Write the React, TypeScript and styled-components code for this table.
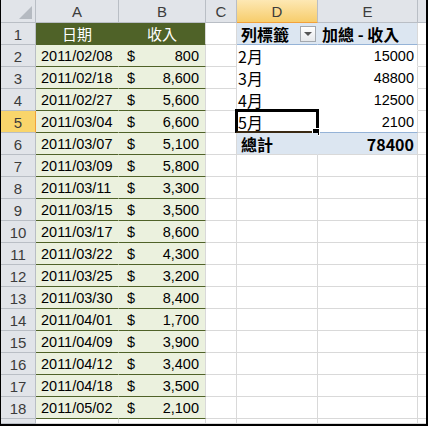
import React from "react";
import styled, { createGlobalStyle, css } from "styled-components";

const Global = createGlobalStyle`
  html, body { margin: 0; padding: 0; background: #fff; }
  body { font-family: "Liberation Sans", Arial, sans-serif; }
  * { box-sizing: border-box; }
`;

const GREEN = "#4f6228";
const LIGHT_GREEN = "#ebf1de";
const GRID = "#d9d9d9";
const HEAD_BG = "#e1e4e9";
const HEAD_LINE = "#b9bec5";
const PIVOT_BG = "#dce6f1";
const PIVOT_LINE = "#95b3d7";

const Frame = styled.div`
  width: 428px;
  height: 426px;
  border-left: 1px solid #000;
  border-right: 2px solid #000;
  border-bottom: 2px solid #000;
  overflow: hidden;
`;

const Sheet = styled.div`
  display: grid;
  grid-template-columns: 35px 83px 87px 31px 81px 100px 1fr;
  grid-template-rows: 23px repeat(18, 22px) 1fr;
  height: 100%;
`;

const cellBase = css`
  border-right: 1px solid ${GRID};
  border-bottom: 1px solid ${GRID};
  display: flex;
  align-items: center;
  min-width: 0;
  overflow: visible;
  white-space: nowrap;
`;

const Corner = styled.div`
  ${cellBase};
  background: ${HEAD_BG};
  border-color: ${HEAD_LINE};
  position: relative;
  &::after {
    content: "";
    position: absolute;
    right: 3px;
    bottom: 3px;
    width: 0;
    height: 0;
    border-left: 13px solid transparent;
    border-bottom: 13px solid #b5bac1;
  }
`;

const ColHeader = styled.div<{ $active?: boolean; $edge?: boolean }>`
  ${cellBase};
  justify-content: center;
  font-family: "Liberation Sans", sans-serif;
  font-size: 15px;
  color: #3c3c3c;
  padding-top: 1px;
  background: ${(p) =>
    p.$active ? "linear-gradient(#fde8b4, #f7cd6c)" : HEAD_BG};
  border-right: ${(p) => (p.$edge ? "none" : `1px solid ${HEAD_LINE}`)};
  border-bottom-color: ${(p) => (p.$active ? "#f2a13a" : HEAD_LINE)};
`;

const RowHeader = styled.div<{ $active?: boolean }>`
  ${cellBase};
  justify-content: center;
  font-family: "Liberation Sans", sans-serif;
  font-size: 15px;
  color: #3c3c3c;
  padding-top: 1px;
  background: ${(p) => (p.$active ? "#f9d56b" : HEAD_BG)};
  border-right-color: ${(p) => (p.$active ? "#f2a13a" : HEAD_LINE)};
  border-bottom-color: ${HEAD_LINE};
`;

const TitleCell = styled.div<{ $last?: boolean }>`
  ${cellBase};
  justify-content: center;
  background: ${GREEN};
  color: #fff;
  font-family: "Noto Sans CJK TC", "Noto Sans CJK SC", sans-serif;
  font-size: 15px;
  border-right-color: ${(p) => (p.$last ? GRID : GREEN)};
  border-bottom-color: ${GREEN};
`;

const DateCell = styled.div`
  ${cellBase};
  background: ${LIGHT_GREEN};
  border-right-color: ${LIGHT_GREEN};
  border-bottom-color: ${GREEN};
  font-size: 14.5px;
  color: #000;
  padding-left: 5px;
  padding-top: 1px;
`;

const MoneyCell = styled.div`
  ${cellBase};
  justify-content: space-between;
  background: ${LIGHT_GREEN};
  border-bottom-color: ${GREEN};
  font-size: 14.5px;
  color: #000;
  padding: 1px 6px 0 8px;
`;

const BlankCell = styled.div`
  ${cellBase};
`;

const EdgeCell = styled.div`
  ${cellBase};
  border-right: none;
`;

const PivotHead = styled.div<{ $first?: boolean }>`
  ${cellBase};
  justify-content: space-between;
  background: ${PIVOT_BG};
  border-right-color: ${(p) => (p.$first ? PIVOT_BG : GRID)};
  border-bottom-color: ${PIVOT_LINE};
  font-family: "Noto Sans CJK TC", "Noto Sans CJK SC", sans-serif;
  font-weight: 700;
  font-size: 16px;
  color: #000;
  padding: 0 1px 0 4px;
`;

const FilterButton = styled.span`
  width: 16px;
  height: 16px;
  border: 1px solid #a3a8ae;
  background: linear-gradient(#ffffff, #e6e8eb);
  display: flex;
  align-items: center;
  justify-content: center;
  &::after {
    content: "";
    width: 0;
    height: 0;
    border-left: 4px solid transparent;
    border-right: 4px solid transparent;
    border-top: 4px solid #555;
  }
`;

const PivotLabel = styled.div<{ $total?: boolean; $edge?: boolean }>`
  ${cellBase};
  position: relative;
  background: ${(p) => (p.$total ? PIVOT_BG : "#fff")};
  border-right-color: ${(p) => (p.$total ? PIVOT_BG : "#fff")};
  border-bottom-color: ${(p) =>
    p.$total ? GRID : p.$edge ? PIVOT_LINE : "#fff"};
  font-family: "Noto Sans CJK TC", "Noto Sans CJK SC", sans-serif;
  font-weight: ${(p) => (p.$total ? 700 : 400)};
  font-size: 16px;
  color: #000;
  padding-left: ${(p) => (p.$total ? "4px" : "1px")};
`;

const PivotValue = styled.div<{ $total?: boolean; $edge?: boolean }>`
  ${cellBase};
  justify-content: flex-end;
  background: ${(p) => (p.$total ? PIVOT_BG : "#fff")};
  border-bottom-color: ${(p) =>
    p.$total ? GRID : p.$edge ? PIVOT_LINE : "#fff"};
  font-family: ${(p) =>
    p.$total
      ? '"Noto Sans CJK TC", sans-serif'
      : '"Liberation Sans", sans-serif'};
  font-weight: ${(p) => (p.$total ? 700 : 400)};
  font-size: ${(p) => (p.$total ? "16px" : "14.5px")};
  color: #000;
  padding-right: 3px;
  padding-top: 1px;
`;

const Selection = styled.div`
  position: absolute;
  left: -2px;
  top: -2px;
  width: 84px;
  height: 24px;
  border: 3px solid #000;
  border-bottom: 2px solid #3a2a14;
  pointer-events: none;
`;

const FillHandle = styled.div`
  position: absolute;
  right: -3px;
  bottom: -4px;
  width: 6px;
  height: 6px;
  background: #000;
  outline: 1px solid #fff;
`;

const dataRows: [string, string][] = [
  ["2011/02/08", "800"],
  ["2011/02/18", "8,600"],
  ["2011/02/27", "5,600"],
  ["2011/03/04", "6,600"],
  ["2011/03/07", "5,100"],
  ["2011/03/09", "5,800"],
  ["2011/03/11", "3,300"],
  ["2011/03/15", "3,500"],
  ["2011/03/17", "8,600"],
  ["2011/03/22", "4,300"],
  ["2011/03/25", "3,200"],
  ["2011/03/30", "8,400"],
  ["2011/04/01", "1,700"],
  ["2011/04/09", "3,900"],
  ["2011/04/12", "3,400"],
  ["2011/04/18", "3,500"],
  ["2011/05/02", "2,100"],
];

const pivotRows: [string, string][] = [
  ["2月", "15000"],
  ["3月", "48800"],
  ["4月", "12500"],
  ["5月", "2100"],
];

const letters = ["A", "B", "C", "D", "E"];

export default function App() {
  const rows: React.ReactNode[] = [];

  rows.push(<Corner key="corner" />);
  letters.forEach((l) =>
    rows.push(
      <ColHeader key={`h-${l}`} $active={l === "D"}>
        {l}
      </ColHeader>
    )
  );
  rows.push(<ColHeader key="h-F" $edge />);

  for (let r = 1; r <= 18; r++) {
    rows.push(
      <RowHeader key={`rh-${r}`} $active={r === 5}>
        {r}
      </RowHeader>
    );
    if (r === 1) {
      rows.push(<TitleCell key="t-a">日期</TitleCell>);
      rows.push(
        <TitleCell key="t-b" $last>
          收入
        </TitleCell>
      );
    } else {
      const [d, v] = dataRows[r - 2];
      rows.push(<DateCell key={`a-${r}`}>{d}</DateCell>);
      rows.push(
        <MoneyCell key={`b-${r}`}>
          <span>$</span>
          <span>{v}</span>
        </MoneyCell>
      );
    }
    rows.push(<BlankCell key={`c-${r}`} />);

    if (r === 1) {
      rows.push(
        <PivotHead key="p-d" $first>
          <span>列標籤</span>
          <FilterButton />
        </PivotHead>
      );
      rows.push(<PivotHead key="p-e">加總 - 收入</PivotHead>);
    } else if (r <= 5) {
      const [label, val] = pivotRows[r - 2];
      const edge = r === 5;
      rows.push(
        <PivotLabel key={`d-${r}`} $edge={edge}>
          {label}
          {r === 5 && (
            <Selection>
              <FillHandle />
            </Selection>
          )}
        </PivotLabel>
      );
      rows.push(
        <PivotValue key={`e-${r}`} $edge={edge}>
          {val}
        </PivotValue>
      );
    } else if (r === 6) {
      rows.push(
        <PivotLabel key="d-6" $total>
          總計
        </PivotLabel>
      );
      rows.push(
        <PivotValue key="e-6" $total>
          78400
        </PivotValue>
      );
    } else {
      rows.push(<BlankCell key={`d-${r}`} />);
      rows.push(<BlankCell key={`e-${r}`} />);
    }
    rows.push(<EdgeCell key={`f-${r}`} />);
  }

  rows.push(<RowHeader key="rh-19" />);
  ["a", "b", "c", "d", "e"].forEach((c) =>
    rows.push(<BlankCell key={`${c}-19`} />)
  );
  rows.push(<EdgeCell key="f-19" />);

  return (
    <>
      <Global />
      <Frame>
        <Sheet>{rows}</Sheet>
      </Frame>
    </>
  );
}
